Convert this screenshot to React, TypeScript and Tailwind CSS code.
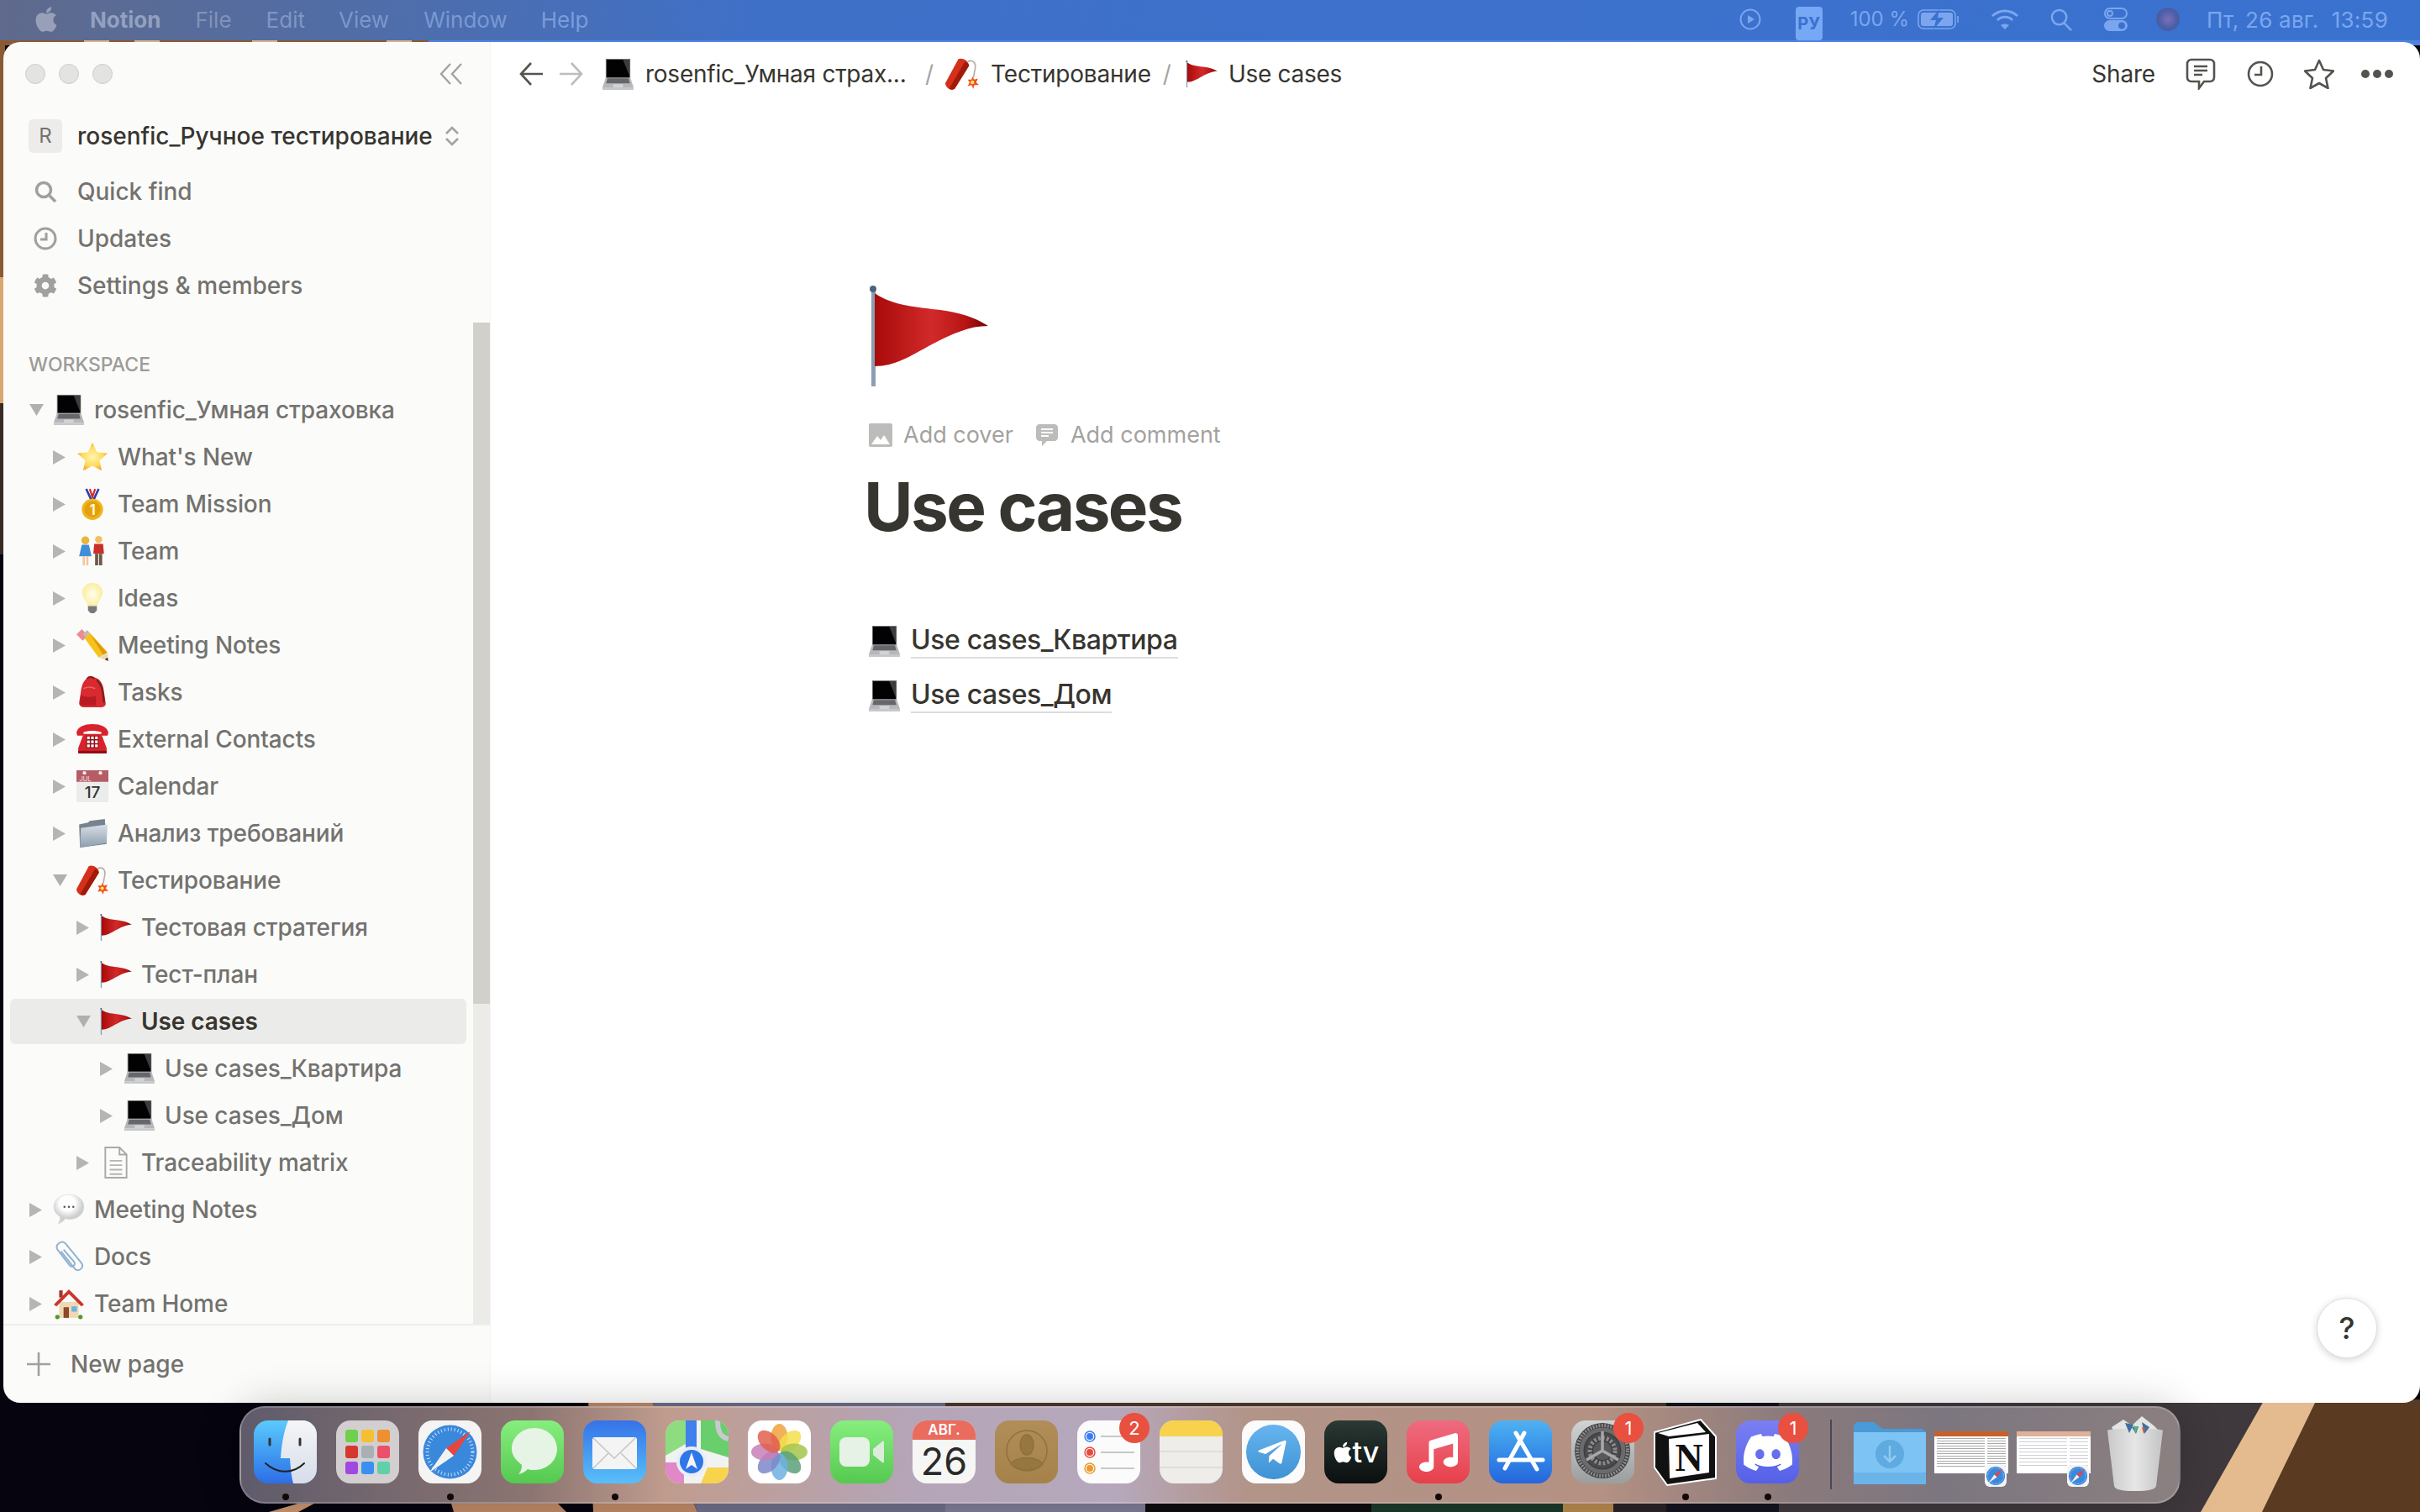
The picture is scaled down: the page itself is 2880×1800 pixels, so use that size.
import { FaApple, FaCog, FaMusic, FaTelegramPlane } from "react-icons/fa";
import { SiDiscord } from "react-icons/si";
import type { ReactNode } from "react";

type IconProps = { className?: string };

function Laptop({ className }: IconProps) {
  return (
    <svg viewBox="0 0 40 38" className={className}>
      <path d="M5 0h30v24H5z" fill="#77787b" />
      <path d="M6 1h28v22H6z" fill="#020203" />
      <path d="M26 1h8v20z" fill="#3c3c40" />
      <path d="M5 23h30l4 12H1z" fill="#b6b7ba" />
      <path d="M7 24h26l1.500 6h-29z" fill="#66676a" />
      <path d="M14 31h12v4H14z" fill="#d2d3d5" />
      <path d="M1 35h38v3H1z" fill="#c6c7c9" />
    </svg>
  );
}

function Flag({ className }: IconProps) {
  return (
    <svg viewBox="0 0 142 120" className={className}>
      <defs>
        <linearGradient id="flagred" x1="0" x2="1" y1="0" y2="0">
          <stop offset="0" stopColor="#a80a0a" />
          <stop offset="0.5" stopColor="#d22a2a" />
          <stop offset="0.8" stopColor="#b81414" />
          <stop offset="1" stopColor="#6e0404" />
        </linearGradient>
      </defs>
      <path d="M3 5h5v115H3z" fill="#8aa0b2" />
      <circle cx="5" cy="4" r="4" fill="#4a6478" />
      <path d="M7 9C28 24 60 26 85 29c22 3 40 8 57 19-22 0-42 9-67 22-26 14-44 26-68 26z" fill="url(#flagred)" />
    </svg>
  );
}

function Star({ className }: IconProps) {
  return (
    <svg viewBox="0 0 36 36" className={className}>
      <defs>
        <radialGradient id="star">
          <stop offset="0" stopColor="#fff6b0" />
          <stop offset="0.7" stopColor="#ffd95a" />
          <stop offset="1" stopColor="#f3a92c" />
        </radialGradient>
      </defs>
      <path d="M18 2l5 10.500 12 1.500-9 8 2.500 11.500L18 28 7.500 33.500 10 22l-9-8 12-1.500z" fill="url(#star)" />
    </svg>
  );
}

function Medal({ className }: IconProps) {
  return (
    <svg viewBox="0 0 36 36" className={className}>
      <path d="M11 1l6 13M25 1l-6 13" stroke="#2b3fa8" strokeWidth="2.500" />
      <path d="M15 1l3 9 3-9" stroke="#d8232a" strokeWidth="2" fill="none" />
      <circle cx="18" cy="24" r="12" fill="#efb51c" />
      <circle cx="18" cy="24" r="9" fill="#e2a00c" />
      <text x="18" y="30" textAnchor="middle" fontSize="16" fontWeight="700" fill="#fff6d0" fontFamily="Inter">
        1
      </text>
    </svg>
  );
}

function People({ className }: IconProps) {
  return (
    <svg viewBox="0 0 36 36" className={className}>
      <circle cx="10" cy="6" r="4.500" fill="#e9b43a" />
      <path d="M6 11h8l3 13H3z" fill="#3f8ed8" />
      <path d="M7 24h2.500v10H7zM11 24h2.500v10H11z" fill="#f0c99a" />
      <circle cx="25" cy="5" r="4" fill="#f0c060" />
      <path d="M20 10h10l1 11H19z" fill="#c9302c" />
      <path d="M21 21h3.500v13H21zM25.500 21H29v13h-3.500z" fill="#6d5848" />
    </svg>
  );
}

function Bulb({ className }: IconProps) {
  return (
    <svg viewBox="0 0 36 36" className={className}>
      <defs>
        <radialGradient id="bulb">
          <stop offset="0" stopColor="#fffff0" />
          <stop offset="1" stopColor="#fbeea0" />
        </radialGradient>
      </defs>
      <path d="M18 1c7 0 11.500 5 11.500 11 0 6-5 8-6 15h-11c-1-7-6-9-6-15C6.500 6 11 1 18 1z" fill="url(#bulb)" />
      <path d="M13 27h10v5l-3 3h-4l-3-3z" fill="#77797c" />
    </svg>
  );
}

function Pencil({ className }: IconProps) {
  return (
    <svg viewBox="0 0 36 36" className={className}>
      <path d="M6 0l7 7-6 6-7-7z" fill="#ec8b90" />
      <path d="M7 6l5-5 3 3-5 5z" fill="#bcbcbc" />
      <path d="M9 10l6-6 20 22-10 6z" fill="#f5c31c" />
      <path d="M15 5l20 22-5 2z" fill="#e09a0a" />
      <path d="M25 32l10-6 1 10z" fill="#eed9b4" />
      <path d="M32 34l3-2 1 4z" fill="#333" />
    </svg>
  );
}

function Backpack({ className }: IconProps) {
  return (
    <svg viewBox="0 0 36 36" className={className}>
      <path d="M17 1c8 0 13 6 14 16l2 14c0 3-3 4-6 4H9c-4 0-6-2-6-5l2-13C6 8 10 1 17 1z" fill="#d82a2f" />
      <path d="M5 21c5 3 12 3 17 1v11H7c-2 0-3-1-3-3z" fill="#b71c22" />
      <path d="M23 4c5 5 7 11 8 26" stroke="#6b2520" strokeWidth="2" fill="none" />
      <path d="M12 3c2-3 6-3 8 0" stroke="#8a1a1c" strokeWidth="2" fill="none" />
      <path d="M8 14c4-2 9-2 13 0" stroke="#f0605f" strokeWidth="1.500" fill="none" />
    </svg>
  );
}

function Phone({ className }: IconProps) {
  return (
    <svg viewBox="0 0 36 36" className={className}>
      <path d="M0 11C1 4 9 1 18 1s17 3 18 10l-1 3h-7v-4c-5-2-15-2-20 0v4H1z" fill="#d9232c" />
      <path d="M8 12h20l6 16v5H2v-5z" fill="#d9232c" />
      <path d="M2 31h32v3H2z" fill="#8f1017" />
      <path d="M11 14h14v14H11z" fill="#8f1017" />
      <path d="M12 15h3v3h-3zM16.500 15h3v3h-3zM21 15h3v3h-3zM12 19.500h3v3h-3zM16.500 19.500h3v3h-3zM21 19.500h3v3h-3zM12 24h3v3h-3zM16.500 24h3v3h-3zM21 24h3v3h-3z" fill="#fff" />
    </svg>
  );
}

function CalendarEmoji({ className }: IconProps) {
  return (
    <svg viewBox="0 0 36 36" className={className}>
      <path d="M0 0h36v36H0z" fill="#ececec" />
      <path d="M0 0h36v13H0z" fill="#b65c65" />
      <circle cx="9" cy="3" r="2" fill="#eee" />
      <circle cx="27" cy="3" r="2" fill="#eee" />
      <text x="3" y="12" fontSize="7.500" fill="#eccdd0" fontFamily="Inter">
        JUL
      </text>
      <text x="18" y="31" textAnchor="middle" fontSize="18" fill="#333" fontFamily="Inter">
        17
      </text>
    </svg>
  );
}

function FolderEmoji({ className }: IconProps) {
  return (
    <svg viewBox="0 0 36 36" className={className}>
      <defs>
        <linearGradient id="fold" x1="0" x2="0" y1="0" y2="1">
          <stop offset="0" stopColor="#d6dfe8" />
          <stop offset="1" stopColor="#8f9dad" />
        </linearGradient>
      </defs>
      <path d="M3 8l10-2 2-2 17-2 2 28-30 4z" fill="#77828f" />
      <path d="M5 12l30-4-1 21-30 5z" fill="url(#fold)" />
    </svg>
  );
}

function Dynamite({ className }: IconProps) {
  return (
    <svg viewBox="0 0 36 36" className={className}>
      <path d="M24 5c5-3 9 1 8 7-1 4-1 7-2 10" stroke="#b5ada2" strokeWidth="1.500" fill="none" />
      <path d="M14 2c4-2 12 2 11 8L10 34c-3 3-10-1-10-6z" fill="#d5301c" />
      <path d="M21 5c3 1 5 3 4 5L10 34c-2 1-4 1-6 0z" fill="#9f1a0a" />
      <path d="M29 21l2 3 4-1-2 4 3 3-5 0-1 4-2-4-4 1 2-4-2-3 4 0z" fill="#f2511c" />
      <circle cx="29" cy="27" r="2" fill="#ffe25a" />
    </svg>
  );
}

function DocEmoji({ className }: IconProps) {
  return (
    <svg viewBox="0 0 36 36" className={className}>
      <path d="M6 1h16l8 8v26H6z" fill="#fbfbfa" stroke="#a9a9a6" strokeWidth="1.800" />
      <path d="M22 1v8h8" fill="none" stroke="#a9a9a6" strokeWidth="1.800" />
      <path d="M11 16h14M11 21h14M11 26h14M11 31h14" stroke="#b4b4b1" strokeWidth="1.800" />
    </svg>
  );
}

function Speech({ className }: IconProps) {
  return (
    <svg viewBox="0 0 36 36" className={className}>
      <defs>
        <radialGradient id="speech" cx="0.45" cy="0.3">
          <stop offset="0.5" stopColor="#ffffff" />
          <stop offset="1" stopColor="#cfcfcf" />
        </radialGradient>
      </defs>
      <path d="M18 1c10 0 17 6 17 14s-7 14-16 14c-2 0-4-.5-5-1-2 3-5 5-8 6 2-3 2-6 2-8-4-3-7-6-7-11C1 7 8 1 18 1z" fill="url(#speech)" stroke="#d7d7d7" strokeWidth="0.500" />
      <circle cx="13" cy="15" r="1.200" fill="#555" />
      <circle cx="18" cy="15" r="1.200" fill="#555" />
      <circle cx="23" cy="15" r="1.200" fill="#555" />
    </svg>
  );
}

function Clip({ className }: IconProps) {
  return (
    <svg viewBox="0 0 36 36" className={className}>
      <path d="M9 12l16 20c4 4 11-2 7-7L14 3C10-1 2 4 5 10l14 18c2 3 7 0 5-4L12 10" fill="none" stroke="#8fb0d0" strokeWidth="1.800" />
    </svg>
  );
}

function House({ className }: IconProps) {
  return (
    <svg viewBox="0 0 36 36" className={className}>
      <path d="M7 16h22v18H7z" fill="#eed9b4" />
      <path d="M7 3h4v8H7z" fill="#a8372c" />
      <path d="M18 2L1 19l3 2L18 7l14 14 3-2z" fill="#c9372c" />
      <path d="M12 22h6v12h-6z" fill="#8c4a2a" />
      <path d="M21 21h6v6h-6z" fill="#6eb2e0" />
      <circle cx="5" cy="33" r="2.500" fill="#4f9a2c" />
      <circle cx="31" cy="33" r="2.500" fill="#4f9a2c" />
    </svg>
  );
}

function Triangle({ open }: { open?: boolean }) {
  if (open) {
    return (
      <svg viewBox="0 0 17 14" className="w-[17px] h-[14px]">
        <path d="M0 0h17l-8.500 14z" fill="#b0b0ad" />
      </svg>
    );
  }
  return (
    <svg viewBox="0 0 15 17" className="w-[15px] h-[17px]">
      <path d="M0 0l15 8.500L0 17z" fill="#b5b5b2" />
    </svg>
  );
}

const pages = [
  { name: "rosenfic_Умная страховка", icon: Laptop, depth: 0, open: true },
  { name: "What's New", icon: Star, depth: 1 },
  { name: "Team Mission", icon: Medal, depth: 1 },
  { name: "Team", icon: People, depth: 1 },
  { name: "Ideas", icon: Bulb, depth: 1 },
  { name: "Meeting Notes", icon: Pencil, depth: 1 },
  { name: "Tasks", icon: Backpack, depth: 1 },
  { name: "External Contacts", icon: Phone, depth: 1 },
  { name: "Calendar", icon: CalendarEmoji, depth: 1 },
  { name: "Анализ требований", icon: FolderEmoji, depth: 1 },
  { name: "Тестирование", icon: Dynamite, depth: 1, open: true },
  { name: "Тестовая стратегия", icon: Flag, depth: 2 },
  { name: "Тест-план", icon: Flag, depth: 2 },
  { name: "Use cases", icon: Flag, depth: 2, open: true, active: true },
  { name: "Use cases_Квартира", icon: Laptop, depth: 3 },
  { name: "Use cases_Дом", icon: Laptop, depth: 3 },
  { name: "Traceability matrix", icon: DocEmoji, depth: 2 },
  { name: "Meeting Notes", icon: Speech, depth: 0 },
  { name: "Docs", icon: Clip, depth: 0 },
  { name: "Team Home", icon: House, depth: 0 },
];

const depthPadding = ["pl-[23px]", "pl-[51px]", "pl-[79px]", "pl-[107px]"];

function Sidebar() {
  return (
    <aside className="w-[580px] shrink-0 flex flex-col bg-[#fbfbfa] border-r border-[#f3f3f1]">
      <div className="h-[76px] shrink-0 flex items-center pl-[26px] pr-[32px]">
        <div className="flex gap-[16px]">
          <span className="w-[24px] h-[24px] rounded-full bg-[#e3e3e2] border border-[#cdcdca]" />
          <span className="w-[24px] h-[24px] rounded-full bg-[#e3e3e2] border border-[#cdcdca]" />
          <span className="w-[24px] h-[24px] rounded-full bg-[#e3e3e2] border border-[#cdcdca]" />
        </div>
        <svg viewBox="0 0 28 26" className="ml-auto w-[28px] h-[26px]" fill="none" stroke="#a3a3a0" strokeWidth="2.400">
          <path d="M13 1L2 13l11 12M26 1L15 13l11 12" />
        </svg>
      </div>
      <div className="mt-[11px] h-[50px] mb-[-1px] shrink-0 flex items-center pl-[30px]">
        <div className="w-[40px] h-[40px] rounded-[5px] bg-[#edecea] flex items-center justify-center text-[24px] text-[#73726e]">R</div>
        <div className="ml-[18px] text-[28px] font-medium text-[#37352f] whitespace-nowrap">rosenfic_Ручное тестирование</div>
        <svg viewBox="0 0 18 26" className="ml-[14px] w-[18px] h-[26px]" fill="none" stroke="#a3a3a0" strokeWidth="2.600">
          <path d="M2 10l7-7 7 7M2 16l7 7 7-7" />
        </svg>
      </div>
      <div className="mt-[14px] pb-[16px] shrink-0">
        <div className="h-[56px] flex items-center pl-[36px] gap-[24px] text-[28px] font-medium text-[#73726e]">
          <svg viewBox="0 0 28 28" className="w-[28px] h-[28px]" fill="none" stroke="#a0a09d" strokeWidth="3.600">
            <circle cx="12" cy="12" r="8.500" />
            <path d="M18 18l8 8" />
          </svg>
          Quick find
        </div>
        <div className="h-[56px] flex items-center pl-[36px] gap-[24px] text-[28px] font-medium text-[#73726e]">
          <svg viewBox="0 0 28 28" className="w-[28px] h-[28px]" fill="none" stroke="#a0a09d" strokeWidth="3">
            <circle cx="14" cy="14" r="12" />
            <path d="M15 7v8H8" />
          </svg>
          Updates
        </div>
        <div className="h-[56px] flex items-center pl-[36px] gap-[24px] text-[28px] font-medium text-[#73726e]">
          <FaCog className="w-[28px] h-[28px] text-[#a0a09d]" />
          Settings &amp; members
        </div>
      </div>
      <div className="flex-1 min-h-0 flex">
        <div className="flex-1 min-w-0 overflow-hidden">
          <div className="mt-[38px] pl-[30px] h-[24px] flex items-center text-[23px] font-medium text-[#9d9c98]">WORKSPACE</div>
          <div className="mt-[15px] px-[8px]">
            {pages.map((page, i) => {
              const Icon = page.icon;
              return (
                <div
                  key={i}
                  className={`h-[54px] mb-[2px] rounded-[6px] flex items-center text-[28px] font-medium tracking-[-0.1px] whitespace-nowrap ${depthPadding[page.depth]} ${
                    page.active ? "bg-[#ebebea] text-[#37352f] font-semibold" : "text-[#73726e]"
                  }`}
                >
                  <span className="w-[25px] shrink-0 flex">
                    <Triangle open={page.open} />
                  </span>
                  <span className="w-[43px] shrink-0 flex justify-center">
                    <Icon className="w-[38px] h-[38px]" />
                  </span>
                  <span className="ml-[9px]">{page.name}</span>
                </div>
              );
            })}
          </div>
        </div>
        <div className="w-[20px] shrink-0 bg-[#ecebe8]">
          <div className="h-[811px] bg-[#d1d0cb]" />
        </div>
      </div>
      <div className="h-[94px] shrink-0 border-t-2 border-[#eeeeec] flex items-center pl-[28px] text-[28px] font-medium text-[#73726e]">
        <svg viewBox="0 0 28 28" className="w-[28px] h-[28px]" stroke="#a0a09d" strokeWidth="2.600">
          <path d="M14 0v28M0 14h28" />
        </svg>
        <span className="ml-[24px]">New page</span>
      </div>
    </aside>
  );
}

function Topbar() {
  return (
    <header className="h-[76px] shrink-0 flex items-center pl-[34px] pr-[32px] text-[28px] text-[#37352f] whitespace-nowrap">
      <svg viewBox="0 0 28 28" className="w-[28px] h-[28px]" fill="none" stroke="#55534e" strokeWidth="2.600">
        <path d="M28 14H2M14 1L2 14l12 13" />
      </svg>
      <svg viewBox="0 0 28 28" className="ml-[20px] w-[28px] h-[28px]" fill="none" stroke="#bdbdba" strokeWidth="2.600">
        <path d="M0 14h26M14 1l12 13-12 13" />
      </svg>
      <Laptop className="ml-[22px] w-[39px] h-[37px]" />
      <span className="ml-[13px] w-[309px] tracking-[-0.25px]">rosenfic_Умная страх...</span>
      <span className="ml-[24px] text-[#a5a5a2]">/</span>
      <Dynamite className="ml-[14px] w-[40px] h-[40px]" />
      <span className="ml-[14px] tracking-[-0.2px]">Тестирование</span>
      <span className="ml-[14px] text-[#a5a5a2]">/</span>
      <Flag className="ml-[17px] w-[38px] h-[32px]" />
      <span className="ml-[13px] tracking-[-0.3px]">Use cases</span>
      <span className="ml-auto tracking-[-0.2px]">Share</span>
      <svg viewBox="0 0 36 38" className="ml-[36px] w-[36px] h-[38px]" fill="none" stroke="#55534e" strokeWidth="2.600">
        <path d="M7 2h22c3 0 5 2 5 5v16c0 3-2 5-5 5h-7l-6 8v-8H7c-3 0-5-2-5-5V7c0-3 2-5 5-5z" />
        <path d="M10 10h16M10 15h16M10 20h10" />
      </svg>
      <svg viewBox="0 0 32 32" className="ml-[37px] w-[32px] h-[32px]" fill="none" stroke="#55534e" strokeWidth="2.600">
        <circle cx="16" cy="16" r="14" />
        <path d="M17 7v10H9" />
      </svg>
      <svg viewBox="0 0 36 36" className="ml-[36px] w-[36px] h-[36px]" fill="none" stroke="#55534e" strokeWidth="2.600" strokeLinejoin="round">
        <path d="M18 2l5 11 12 1.500-9 8.500 2.500 12L18 29 7.500 35 10 23l-9-8.500L13 13z" />
      </svg>
      <div className="ml-[32px] flex gap-[4px]">
        <span className="w-[10px] h-[10px] rounded-full bg-[#55534e]" />
        <span className="w-[10px] h-[10px] rounded-full bg-[#55534e]" />
        <span className="w-[10px] h-[10px] rounded-full bg-[#55534e]" />
      </div>
    </header>
  );
}

function PageLink({ label }: { label: string }) {
  return (
    <div className="h-[56px] mb-[9px] flex items-center">
      <Laptop className="ml-[2px] w-[39px] h-[37px]" />
      <span className="ml-[12px] text-[32px] font-medium tracking-[-0.4px] text-[#37352f] leading-[40px] border-b-2 border-[#dcdcda]">{label}</span>
    </div>
  );
}

function Main() {
  return (
    <main className="flex-1 min-w-0 flex flex-col bg-white relative">
      <Topbar />
      <div className="pl-[447px] pt-[214px]">
        <Flag className="ml-[3px] w-[142px] h-[120px]" />
        <div className="mt-[40px] h-[36px] flex items-center ml-[3px] text-[27px] text-[#a3a29e]">
          <svg viewBox="0 0 28 28" className="w-[28px] h-[28px]">
            <path d="M2 0h24c1 0 2 1 2 2v24c0 1-1 2-2 2H2c-1 0-2-1-2-2V2C0 1 1 0 2 0z" fill="#bcbcba" />
            <path d="M3 25l7-10 4 5 4-6 7 11z" fill="#fff" />
          </svg>
          <span className="ml-[13px]">Add cover</span>
          <svg viewBox="0 0 26 26" className="ml-[27px] w-[26px] h-[26px]">
            <path d="M4 0h18c2 0 4 2 4 4v12c0 2-2 4-4 4h-9l-6 6v-6H4c-2 0-4-2-4-4V4c0-2 2-4 4-4z" fill="#bcbcba" />
            <path d="M6 6h14M6 10h14M6 14h9" stroke="#fff" strokeWidth="1.800" />
          </svg>
          <span className="ml-[15px]">Add comment</span>
        </div>
        <h1 className="mt-[19px] -ml-[3px] text-[80px] leading-[96px] font-bold tracking-[-2.600px] text-[#37352f]">Use cases</h1>
        <div className="mt-[84px]">
          <PageLink label="Use cases_Квартира" />
          <PageLink label="Use cases_Дом" />
        </div>
      </div>
      <button className="absolute right-[51px] bottom-[53px] w-[72px] h-[72px] rounded-full bg-white border border-[#dfdfdd] shadow-[0_2px_8px_rgba(15,15,15,0.18)] text-[36px] font-medium text-[#37352f]">
        ?
      </button>
    </main>
  );
}

function MenuBar() {
  return (
    <div className="h-[48px] mb-[2px] pb-[2px] shrink-0 flex items-center pl-[40px] pr-[38px] text-[26px] bg-[linear-gradient(90deg,#5f6a8c_0,#516da6_400px,#3f70c8_900px,#3a72d0_100%)]">
      <FaApple className="w-[30px] h-[34px] text-[#97a0b8]" />
      <span className="ml-[37px] font-bold text-[#93a0bf]">Notion</span>
      <span className="ml-[41px] text-[#8392b8]">File</span>
      <span className="ml-[41px] text-[#8096c4]">Edit</span>
      <span className="ml-[40px] text-[#7c97cb]">View</span>
      <span className="ml-[41px] text-[#7a99d3]">Window</span>
      <span className="ml-[40px] text-[#7a9dda]">Help</span>
      <svg viewBox="0 0 26 26" className="ml-auto w-[26px] h-[26px]" fill="none" stroke="#7ba6ee" strokeWidth="2">
        <circle cx="13" cy="13" r="11.500" />
        <path d="M10 8l8 5-8 5z" fill="#7ba6ee" stroke="none" />
      </svg>
      <span className="ml-[41px] w-[32px] h-[40px] mt-[10px] rounded-[4px] bg-[#76a8f5] flex items-center justify-center text-[20px] font-bold text-[#3a72d0]">РУ</span>
      <span className="ml-[33px] text-[24px] text-[#7ba6ee]">100 %</span>
      <svg viewBox="0 0 50 24" className="ml-[10px] w-[50px] h-[24px]" fill="none" stroke="#7ba6ee" strokeWidth="1.600">
        <rect x="1" y="1" width="44" height="22" rx="6" />
        <rect x="4" y="4" width="38" height="16" rx="3" fill="#7ba6ee" stroke="none" />
        <path d="M26 0L15 13h7l-3 11 12-14h-7z" fill="#3a72d0" stroke="none" />
        <path d="M48 8v8" />
      </svg>
      <svg viewBox="0 0 32 24" className="ml-[38px] w-[32px] h-[24px]" fill="none" stroke="#7ba6ee" strokeWidth="3">
        <path d="M1 8c9-8 21-8 30 0M7 13c5-5 13-5 18 0" />
        <path d="M16 24l-5-5c3-2 7-2 10 0z" fill="#7ba6ee" stroke="none" />
      </svg>
      <svg viewBox="0 0 28 28" className="ml-[38px] w-[27px] h-[27px]" fill="none" stroke="#7ba6ee" strokeWidth="2.600">
        <circle cx="11" cy="11" r="9" />
        <path d="M17 18l9 9" />
      </svg>
      <svg viewBox="0 0 28 28" className="ml-[37px] w-[28px] h-[28px]" fill="none" stroke="#7ba6ee" strokeWidth="2">
        <rect x="1" y="1" width="26" height="12" rx="6" />
        <circle cx="7" cy="7" r="3" />
        <rect x="0" y="15" width="28" height="13" rx="6.500" fill="#7ba6ee" stroke="none" />
        <circle cx="21" cy="21.500" r="4" fill="#3a72d0" stroke="none" />
      </svg>
      <span className="ml-[34px] w-[28px] h-[28px] rounded-full bg-[radial-gradient(circle,#7d6fb8_0,#4a5ea8_55%,#3f5e9c_100%)]" />
      <span className="ml-[32px] tracking-[0.25px] text-[#7ba6ee] whitespace-pre">Пт, 26 авг.  13:59</span>
    </div>
  );
}

function Wallpaper() {
  return (
    <svg viewBox="0 0 2880 1800" className="absolute inset-0 w-[2880px] h-[1800px]">
      <rect width="2880" height="1800" fill="#05040f" />
      <path d="M0 48h520v6H0z" fill="#8a5a33" />
      <path d="M100 48h30v4h-30zM160 48h30v4h-30zM300 48h30v4h-30zM460 48h30v4h-30z" fill="#d6b48e" />
      <path d="M510 48h2370v6H510z" fill="#4f83e0" />
      <path d="M0 50h6v280H0z" fill="#8a5a33" />
      <path d="M0 330h6v150H0z" fill="#d8a870" />
      <path d="M0 480h6v180H0z" fill="#3a2a24" />
      <path d="M320 1800l55-16h10l-30 16z" fill="#c99670" />
      <path d="M534 1780h120l20 20H540z" fill="#bf8a68" />
      <path d="M700 1666h75l55 134H706z" fill="#bf8a68" />
      <path d="M775 1666h350v134H830z" fill="#6f6f8a" />
      <path d="M1125 1666h240v134h-240z" fill="#7f7c98" />
      <path d="M1125 1666h880v24h-880z" fill="#4f3a2c" />
      <path d="M1363 1770h270v30h-270z" fill="#100c10" />
      <path d="M1632 1770h228v30h-228z" fill="#1c3a2c" />
      <path d="M1860 1770h60v30h-60z" fill="#b88a50" />
      <path d="M1920 1770h63v30h-63z" fill="#2a2226" />
      <path d="M1983 1666h134v134h-134z" fill="#14141f" />
      <path d="M2117 1666h650v134h-650z" fill="#3f393d" />
      <path d="M2757 1666h123v134H2692z" fill="#5a3a20" />
      <path d="M2695 1666h62l-65 134h-73z" fill="#e3bb8e" />
    </svg>
  );
}

function Tile({ className, children }: { className: string; children?: ReactNode }) {
  return <div className={`w-[75px] h-[75px] rounded-[17px] overflow-hidden ${className}`}>{children}</div>;
}

const launchpadColors = ["bg-[#6ed04c]", "bg-[#f5c030]", "bg-[#ee9030]", "bg-[#d6382e]", "bg-[#a8b0b4]", "bg-[#ec5068]", "bg-[#a048e0]", "bg-[#3a90f0]", "bg-[#60d0a8]"];

const petals = ["#f0a23c", "#f3df4c", "#a4c54c", "#5da07a", "#6fb0e0", "#7d88c8", "#c77fb8", "#e0604c"];

function Finder() {
  return (
    <Tile className="bg-linear-to-b from-[#5ccafc] to-[#2f6de6]">
      <svg viewBox="0 0 75 75" className="w-[75px] h-[75px]">
        <defs>
          <linearGradient id="finderr" x1="0" x2="0" y1="0" y2="1">
            <stop offset="0" stopColor="#f5f5f7" />
            <stop offset="1" stopColor="#d6deea" />
          </linearGradient>
        </defs>
        <path d="M41 0h34v75H47c-2-8-3-16-4-30H32c1-18 4-32 9-45z" fill="url(#finderr)" />
        <path d="M19 22v7M55 22v7" stroke="#333" strokeWidth="3" strokeLinecap="round" />
        <path d="M14 51c14 13 33 13 46 0" stroke="#222" strokeWidth="2" fill="none" strokeLinecap="round" />
      </svg>
    </Tile>
  );
}

function Launchpad() {
  return (
    <Tile className="bg-[#d3cfd0] grid grid-cols-3 gap-[4px] p-[11px]">
      {launchpadColors.map((c) => (
        <span key={c} className={`rounded-[3px] ${c}`} />
      ))}
    </Tile>
  );
}

function Safari({ className = "w-[75px] h-[75px]" }: IconProps) {
  return (
    <svg viewBox="0 0 75 75" className={className}>
      <rect width="75" height="75" rx="17" fill="#f4f4f4" />
      <circle cx="37.500" cy="37.500" r="32" fill="#3a88dc" />
      <circle cx="37.500" cy="37.500" r="27" fill="none" stroke="#cfe3f7" strokeWidth="4" strokeDasharray="1 3" />
      <path d="M62 13L33 33l9 9z" fill="#e8453c" />
      <path d="M13 62l29-20-9-9z" fill="#f2f2f2" />
    </svg>
  );
}

function Messages() {
  return (
    <Tile className="bg-linear-to-b from-[#86ee7e] to-[#55c950]">
      <svg viewBox="0 0 75 75" className="w-[75px] h-[75px]">
        <path d="M40 9c15 0 27 11 27 25S55 59 40 59c-3 0-6 0-8-1-3 3-6 5-11 6 3-3 4-7 4-11-6-5-12-11-12-19C13 20 25 9 40 9z" fill="#e6f4e6" />
      </svg>
    </Tile>
  );
}

function Mail() {
  return (
    <Tile className="bg-linear-to-b from-[#3772e8] to-[#59bff9]">
      <svg viewBox="0 0 75 75" className="w-[75px] h-[75px]">
        <rect x="11" y="20" width="53" height="38" rx="3" fill="#f4f4f4" />
        <path d="M12 21l25 24 25-24M12 57l18-18M63 57L45 39" stroke="#c4c4c6" strokeWidth="1.500" fill="none" />
      </svg>
    </Tile>
  );
}

function Maps() {
  return (
    <Tile className="bg-[#f2f2f2]">
      <svg viewBox="0 0 75 75" className="w-[75px] h-[75px]">
        <path d="M0 0h24v28L0 42z" fill="#8edc80" />
        <path d="M42 0h33v44L42 34z" fill="#68cf6c" />
        <path d="M0 50l22 0 0 25H0z" fill="#e088c8" />
        <path d="M50 56h25v19H42z" fill="#f8d44c" />
        <path d="M62 0c0 14 4 20 13 22" fill="none" stroke="#c9c9cf" strokeWidth="6" />
        <path d="M24 0h13v34H24z" fill="#3f80ec" />
        <circle cx="31" cy="49" r="18" fill="#e8eef8" />
        <circle cx="31" cy="49" r="14" fill="#2f76e8" />
        <path d="M31 38l7 20-7-5-7 5z" fill="#f4f4f4" />
      </svg>
    </Tile>
  );
}

function Photos() {
  return (
    <Tile className="bg-white">
      <svg viewBox="0 0 75 75" className="w-[75px] h-[75px]">
        {petals.map((c, i) => (
          <ellipse key={c} cx="37.500" cy="20" rx="10" ry="16" fill={c} fillOpacity="0.850" transform={`rotate(${i * 45} 37.500 37.500)`} />
        ))}
      </svg>
    </Tile>
  );
}

function FaceTime() {
  return (
    <Tile className="bg-linear-to-b from-[#86ee7e] to-[#55c950]">
      <svg viewBox="0 0 75 75" className="w-[75px] h-[75px]">
        <rect x="11" y="20" width="36" height="35" rx="8" fill="#e6f2e6" />
        <path d="M51 34l11-9c1-1 2 0 2 1v23c0 1-1 2-2 1l-11-9z" fill="#dcecdc" />
      </svg>
    </Tile>
  );
}

function CalendarApp() {
  return (
    <Tile className="bg-[#f6f6f4] flex flex-col items-center">
      <div className="w-full h-[23px] bg-[#ea6c5e] text-[17px] font-semibold leading-[23px] text-center text-white">АВГ.</div>
      <div className="text-[45px] leading-[52px] text-[#2a2a2a]">26</div>
    </Tile>
  );
}

function Contacts() {
  return (
    <Tile className="bg-linear-to-b from-[#b18e58] to-[#a5824a]">
      <svg viewBox="0 0 75 75" className="w-[75px] h-[75px]" fill="none" stroke="#8f703e" strokeWidth="1.500">
        <circle cx="38" cy="36" r="24" />
        <ellipse cx="38" cy="29" rx="8" ry="12" fill="#96773f" />
        <path d="M19 52c5-10 33-10 38 0-8 9-30 9-38 0z" fill="#96773f" />
      </svg>
    </Tile>
  );
}

function Reminders() {
  return (
    <Tile className="bg-[#fbfbfb]">
      <svg viewBox="0 0 75 75" className="w-[75px] h-[75px]">
        <circle cx="15" cy="19" r="6" fill="none" stroke="#3a7cf0" strokeWidth="1.500" />
        <circle cx="15" cy="19" r="4" fill="#3a7cf0" />
        <circle cx="15" cy="38" r="6" fill="none" stroke="#e54a3c" strokeWidth="1.500" />
        <circle cx="15" cy="38" r="4" fill="#e54a3c" />
        <circle cx="15" cy="57" r="6" fill="none" stroke="#ee9a2c" strokeWidth="1.500" />
        <circle cx="15" cy="57" r="4" fill="#ee9a2c" />
        <path d="M28 19h40M28 38h40M28 57h40" stroke="#b8b8b8" strokeWidth="1.500" />
      </svg>
    </Tile>
  );
}

function Notes() {
  return (
    <Tile className="bg-[#eeedea]">
      <svg viewBox="0 0 75 75" className="w-[75px] h-[75px]">
        <path d="M0 0h75v19H0z" fill="#f8d24c" />
        <path d="M0 37h75M0 56h75" stroke="#d8d8d4" strokeWidth="1.500" />
      </svg>
    </Tile>
  );
}

function Telegram() {
  return (
    <Tile className="bg-[#fbfbfb] flex items-center justify-center relative">
      <span className="w-[65px] h-[65px] rounded-full bg-linear-to-b from-[#66b5f0] to-[#3f92d4] flex items-center justify-center">
        <FaTelegramPlane className="w-[38px] h-[38px] text-white -ml-[3px]" />
      </span>
    </Tile>
  );
}

function AppleTv() {
  return (
    <Tile className="bg-linear-to-b from-[#2a3a33] to-[#0b0f10] flex items-center justify-center text-white">
      <FaApple className="w-[24px] h-[28px]" />
      <span className="text-[34px] font-medium leading-none">tv</span>
    </Tile>
  );
}

function Music() {
  return (
    <Tile className="bg-linear-to-b from-[#ef6a80] to-[#e73f4a] flex items-center justify-center">
      <FaMusic className="w-[46px] h-[50px] text-white" />
    </Tile>
  );
}

function AppStore() {
  return (
    <Tile className="bg-linear-to-b from-[#4fb2f2] to-[#2565dc]">
      <svg viewBox="0 0 75 75" className="w-[75px] h-[75px]" stroke="#fff" strokeWidth="5" strokeLinecap="round">
        <path d="M32 15l25 43M42 15L19 57M12 47h52" />
      </svg>
    </Tile>
  );
}

function SystemSettings() {
  return (
    <Tile className="bg-linear-to-b from-[#d0d4d4] to-[#9b9e9e]">
      <svg viewBox="0 0 75 75" className="w-[75px] h-[75px]" fill="none">
        <circle cx="37" cy="36" r="33" fill="#3f3f41" />
        <circle cx="37" cy="36" r="30" stroke="#8d8d8f" strokeWidth="4" strokeDasharray="2 1.500" />
        <circle cx="37" cy="36" r="25" stroke="#6b6b6e" strokeWidth="5" />
        <circle cx="37" cy="36" r="19" stroke="#4a4a4c" strokeWidth="4" />
        <circle cx="37" cy="36" r="15" stroke="#8a8a8c" strokeWidth="5" strokeDasharray="3 2" />
        <circle cx="37" cy="36" r="11" fill="#59595b" />
        <path d="M37 36V13M37 36l19 11M37 36L18 47" stroke="#a8a8aa" strokeWidth="3.500" />
      </svg>
    </Tile>
  );
}

function NotionApp() {
  return (
    <div className="w-[75px] h-[80px] -mt-[2px]">
      <svg viewBox="0 0 75 80" className="w-[75px] h-[80px]">
        <path d="M1 16L56 1l18 20v50L16 79 1 58z" fill="#111" stroke="#fff" strokeWidth="2" strokeLinejoin="round" />
        <path d="M18 24l48-6v46l-47 7z" fill="#fff" />
        <path d="M5 17l47-12 10 11-44 5z" fill="#fff" />
        <text x="42" y="62" textAnchor="middle" fontSize="46" fontWeight="700" fontFamily="Liberation Serif" fill="#111">
          N
        </text>
      </svg>
    </div>
  );
}

function Discord() {
  return (
    <Tile className="bg-linear-to-b from-[#7a7ff2] to-[#5560e8] flex items-center justify-center">
      <SiDiscord className="w-[58px] h-[58px] text-white" />
    </Tile>
  );
}

const dockApps: { app: () => ReactNode; badge?: string; running?: boolean }[] = [
  { app: Finder, running: true },
  { app: Launchpad },
  { app: Safari, running: true },
  { app: Messages },
  { app: Mail, running: true },
  { app: Maps },
  { app: Photos },
  { app: FaceTime },
  { app: CalendarApp },
  { app: Contacts },
  { app: Reminders, badge: "2" },
  { app: Notes },
  { app: Telegram },
  { app: AppleTv },
  { app: Music, running: true },
  { app: AppStore },
  { app: SystemSettings, badge: "1" },
  { app: NotionApp, running: true },
  { app: Discord, badge: "1", running: true },
];

function DocThumb({ header, lines }: { header: string; lines: string }) {
  return (
    <div className="relative w-[88px] h-[50px] mt-[13px] bg-white">
      <div className={`h-[6px] ${header}`} />
      <div className="mt-[2px] mx-[3px] flex gap-[3px] h-[36px]">
        <div className={`flex-1 ${lines}`} />
        <div className={`w-[22px] ${lines}`} />
      </div>
      <Safari className="absolute right-[2px] -bottom-[16px] w-[26px] h-[26px]" />
    </div>
  );
}

function Dock() {
  return (
    <div className="relative ml-[285px] mt-[4px] w-[2310px] h-[116px] rounded-[30px] border-2 border-white/20 flex items-start pl-[15px] pt-[15px] shadow-[0_0_50px_rgba(0,0,0,0.22)] bg-[linear-gradient(90deg,#5f5b6b_0,#8c7571_15%,#c09c8e_22%,#b4a5b8_35%,#b6a8bc_45%,#b29488_52%,#b49183_70%,#8a7a7c_80%,#7c7680_88%,#8b8080_100%)]">
      <div className="flex gap-[23px]">
        {dockApps.map((item, i) => {
          const App = item.app;
          return (
            <div key={i} className="relative w-[75px] h-[75px]">
              <App />
              {item.badge && (
                <span className="absolute left-[50px] -top-[9px] w-[36px] h-[36px] rounded-full bg-[#e9503f] flex items-center justify-center text-[22px] text-white">
                  {item.badge}
                </span>
              )}
              {item.running && <span className="absolute left-[34px] top-[87px] w-[8px] h-[8px] rounded-full bg-[#120808]" />}
            </div>
          );
        })}
      </div>
      <div className="ml-[37px] -mt-[1px] w-[2px] h-[83px] bg-[#4a4654]" />
      <svg viewBox="0 0 86 74" className="ml-[26px] mt-[2px] w-[86px] h-[74px]">
        <path d="M0 6c0-3 2-6 6-6h18l10 8h46c3 0 6 3 6 6v10H0z" fill="#4a9ad8" />
        <path d="M0 12h86v56c0 3-3 6-6 6H6c-3 0-6-3-6-6z" fill="#7dc3f4" />
        <path d="M0 60h86v14H0z" fill="#6ab4ea" />
        <circle cx="43" cy="38" r="17" fill="#5faae0" />
        <path d="M43 28v19M36 40l7 7 7-7" stroke="#8fcaf2" strokeWidth="2.500" fill="none" />
      </svg>
      <div className="ml-[10px]">
        <DocThumb header="bg-[#c8602a]" lines="bg-[repeating-linear-gradient(180deg,#a8a8a8_0,#a8a8a8_1px,#fff_1px,#fff_3px)]" />
      </div>
      <div className="ml-[10px]">
        <DocThumb header="bg-[#e0b09a]" lines="bg-[repeating-linear-gradient(180deg,#cfcfd4_0,#cfcfd4_1px,#fff_1px,#fff_4px)]" />
      </div>
      <svg viewBox="0 0 68 90" className="ml-[19px] -mt-[6px] w-[68px] h-[90px]">
        <defs>
          <linearGradient id="trash" x1="0" x2="1" y1="0" y2="0">
            <stop offset="0" stopColor="#c9c9c9" />
            <stop offset="0.5" stopColor="#e6e6e6" />
            <stop offset="1" stopColor="#c4c4c4" />
          </linearGradient>
        </defs>
        <path d="M6 14l14-9 10 7 12-11 14 11 6 6H8z" fill="#e4e4e4" />
        <path d="M1 18c0-3 66-3 66 0l-8 66c-1 4-8 6-25 6s-24-2-25-6z" fill="url(#trash)" />
        <path d="M22 9l10 2-5 10zM30 14l8-1-3 9zM42 8l9 6-6 8z" fill="#3f6f9f" />
        <path d="M32 12l5 2-3 8z" fill="#4fb86a" />
        <path d="M42 14l4 1-2 7z" fill="#d0602c" />
      </svg>
    </div>
  );
}

export default function App() {
  return (
    <div className="relative w-[2880px] h-[1800px] overflow-hidden font-['Inter',sans-serif]">
      <Wallpaper />
      <div className="relative flex flex-col h-full">
        <MenuBar />
        <div className="ml-[4px] h-[1620px] shrink-0 flex rounded-[20px] overflow-hidden">
          <Sidebar />
          <Main />
        </div>
        <Dock />
      </div>
    </div>
  );
}
